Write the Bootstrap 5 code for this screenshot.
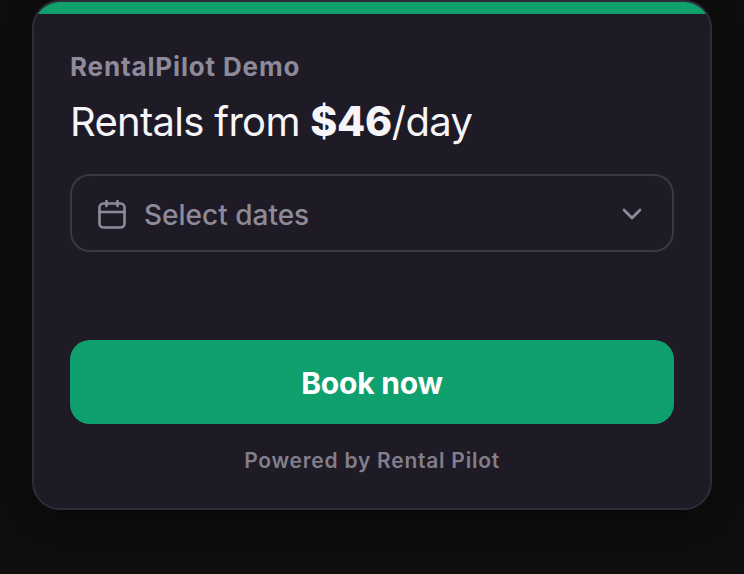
<!DOCTYPE html>
<html lang="en">
<head>
<meta charset="utf-8">
<title>RentalPilot Demo</title>
<link href="https://cdn.jsdelivr.net/npm/bootstrap@5.3.0/dist/css/bootstrap.min.css" rel="stylesheet">
<style>
html, body { height: 100%; }
body { background: #0e0e0f; font-family: Inter, "Liberation Sans", sans-serif; overflow: hidden; }
.stage { padding: 0 32px; }
.widget { height: 510px; background: #1e1b26; border: 2px solid #2f2c39; border-radius: 28px; overflow: hidden; box-shadow: 0 8px 32px rgba(0,0,0,.4); }
.stripe { height: 12px; background: #10a06d; }
.widget-body { padding: 38px 36px 0; }
.brand { font-size: 26px; line-height: 30px; font-weight: 700; color: #8e8a99; letter-spacing: .85px; }
.headline { font-size: 40px; line-height: 46px; font-weight: 400; color: #f6f5f8; letter-spacing: -.7px; margin: 16px 0 0; }
.headline strong { font-weight: 800; font-size: 41px; letter-spacing: -.3px; }
.picker { height: 78px; margin-top: 29px; padding: 2px 30px 0 26px; background: transparent; border: 2px solid #3b3846; border-radius: 20px; color: #8e8a99; font-size: 28px; font-weight: 500; gap: 18px; }
.picker:hover, .picker:active { background: transparent; border-color: #3b3846; color: #8e8a99; }
.picker-label { padding-top: 2px; }
.cta { height: 84px; margin-top: 88px; padding-top: 8px; background: #10a06d; border: 0; border-radius: 20px; color: #fff; font-size: 30px; font-weight: 700; letter-spacing: -.2px; }
.cta:hover, .cta:active { background: #10a06d; color: #fff; }
.powered { margin-top: 24px; font-size: 21px; line-height: 26px; font-weight: 600; color: #827e8b; letter-spacing: .75px; text-align: center; }
</style>
</head>
<body>
<div class="stage">
  <div class="widget">
    <div class="stripe"></div>
    <div class="widget-body">
      <div class="brand">RentalPilot Demo</div>
      <h1 class="headline">Rentals from <strong>$46</strong>/day</h1>
      <button type="button" class="btn picker w-100 d-flex align-items-center">
        <svg width="28" height="29" viewBox="0 0 28 29" fill="none" stroke="currentColor" stroke-width="2.6" stroke-linecap="round" stroke-linejoin="round" aria-hidden="true"><rect x="1.500" y="3.500" width="25" height="24" rx="4"/><path d="M1.500 12h25M8.500 1v5M19.500 1v5"/></svg>
        <span class="picker-label flex-grow-1 text-start">Select dates</span>
        <svg width="20" height="12" viewBox="0 0 20 12" fill="none" stroke="currentColor" stroke-width="2.8" stroke-linecap="round" stroke-linejoin="round" aria-hidden="true"><path d="M2 2l8 8 8-8"/></svg>
      </button>
      <button type="button" class="btn cta w-100">Book now</button>
      <div class="powered">Powered by Rental Pilot</div>
    </div>
  </div>
</div>
<script src="https://cdn.jsdelivr.net/npm/bootstrap@5.3.0/dist/js/bootstrap.bundle.min.js"></script>
</body>
</html>
